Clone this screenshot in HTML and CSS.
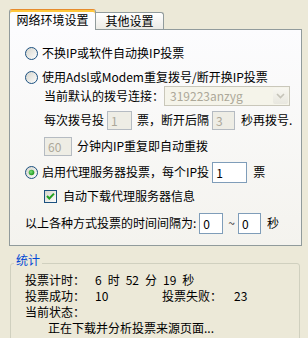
FILE: index.html
```html
<!DOCTYPE html>
<html>
<head>
<meta charset="utf-8" />
<title>投票设置</title>
<link rel="stylesheet" href="styles.css">
</head>
<body>
<svg class="defs" width="0" height="0">
	<defs>
		<linearGradient id="xpFill" x1="0" y1="0" x2="1" y2="1">
			<stop offset="0" stop-color="#D4D3CA"/>
			<stop offset="1" stop-color="#FFFFFF"/>
		</linearGradient>
		<radialGradient id="xpDot" cx="0.4" cy="0.4" r="0.6">
			<stop offset="0" stop-color="#7BE07B"/>
			<stop offset="1" stop-color="#1E961E"/>
		</radialGradient>
	</defs>
</svg>
<div class="tabbox">
	<div class="tabs">
		<div class="tab tab-on">网络环境设置</div>
		<div class="tab">其他设置</div>
	</div>
	<div class="panel">
		<div class="row pl1">
			<svg class="radio" viewBox="0 0 13 13"><circle cx="6.5" cy="6.5" r="6" fill="url(#xpFill)" stroke="#1C5180"/></svg>
			不换IP或软件自动换IP投票
		</div>
		<div class="row pl1 mt6">
			<svg class="radio" viewBox="0 0 13 13"><circle cx="6.5" cy="6.5" r="6" fill="url(#xpFill)" stroke="#1C5180"/></svg>
			使用Adsl或Modem重复拨号/断开换IP投票
		</div>
		<div class="row row-h20 pl2">
			当前默认的拨号连接：
			<div class="combo">
				<span class="combo-text">319223anzyg</span>
				<span class="combo-btn"><svg width="9" height="6" viewBox="0 0 9 6"><path d="M1 1 L4.5 4.5 L8 1" fill="none" stroke="#C5C3B8" stroke-width="1.6"/></svg></span>
			</div>
		</div>
		<div class="row row-h20 pl2 mt4">
			每次拨号投<input class="box box-off w25" type="text" value="1" disabled>票，断开后隔<input class="box box-off w23" type="text" value="3" disabled><span class="gap6">秒再拨号.</span>
		</div>
		<div class="row row-h20 pl2 mt6">
			<input class="box box-off w28 first" type="text" value="60" disabled>分钟内IP重复即自动重拨
		</div>
		<div class="row row-h22 pl1 mt5">
			<svg class="radio" viewBox="0 0 13 13"><circle cx="6.5" cy="6.5" r="6" fill="url(#xpFill)" stroke="#1C5180"/><circle cx="6.5" cy="6.5" r="2.8" fill="url(#xpDot)"/></svg>
			启用代理服务器投票，每个IP投<input class="box w35" type="text" value="1"><span class="gap6">票</span>
		</div>
		<div class="row pl2 mt4">
			<svg class="check" viewBox="0 0 13 13"><rect x="0.5" y="0.5" width="12" height="12" fill="url(#xpFill)" stroke="#1C5180"/><path d="M3 6 L5.3 8.5 L10 3.6" fill="none" stroke="#21A121" stroke-width="2"/></svg>
			自动下载代理服务器信息
		</div>
		<div class="row row-h22 pl1 mt7">
			以上各种方式投票的时间间隔为:<input class="box w24" type="text" value="0"><span class="tilde">~</span><input class="box w23 first" type="text" value="0"><span class="gap6">秒</span>
		</div>
	</div>
</div>
<fieldset class="stats">
	<legend>统计</legend>
	<div class="grid">
		<span>投票计时：</span>
		<span class="time"><span>6</span><span>时</span><span>52</span><span>分</span><span>19</span><span>秒</span></span>
		<span>投票成功：</span>
		<span>10</span>
		<span>投票失败：</span>
		<span>23</span>
		<span class="full">当前状态：</span>
		<span class="full status">正在下载并分析投票来源页面...</span>
	</div>
</fieldset>
</body>
</html>
```

FILE: styles.css
```css
*{margin: 0;padding: 0;box-sizing: border-box;}
html,body{height: 100%;overflow: hidden;}
body{background-color: #ECE9D8;color: #000;font: 12px/16px "Noto Sans CJK SC", "Liberation Sans", sans-serif;}
.defs{position: absolute;width: 0;height: 0;}

.tabbox{margin: 9px 6px 0 9px;}
.tabs{display: flex;align-items: flex-end;height: 20px;}
.tab{width: 68px;height: 17px;border: 1px solid #919B9C;border-bottom: 0;border-left: 0;border-radius: 0 3px 0 0;background: linear-gradient(#FFFFFF, #ECEBE6);text-align: center;line-height: 16px;}
.tab-on{position: relative;z-index: 1;width: 87px;height: 21px;margin-bottom: -1px;padding-top: 2px;border-left: 1px solid #919B9C;border-top: 1px solid #E68B2C;border-radius: 3px 3px 0 0;background: #FCFCFE;box-shadow: inset 0 2px 0 #FFC73C;}

.panel{height: 217px;padding-top: 14px;border: 1px solid #919B9C;background: linear-gradient(#FCFCFE, #F4F3EE);}
.row{display: flex;align-items: center;height: 18px;white-space: nowrap;}
.row-h20{height: 20px;}
.row-h22{height: 22px;}
.pl1{padding-left: 15px;}
.pl2{padding-left: 34px;}
.mt4{margin-top: 4px;}
.mt5{margin-top: 5px;}
.mt6{margin-top: 6px;}
.mt7{margin-top: 7px;}

.radio{flex: none;width: 13px;height: 13px;margin-right: 4px;}
.check{flex: none;width: 13px;height: 13px;margin-right: 6px;}

.combo{display: flex;width: 126px;height: 20px;border: 1px solid #C9C7BA;background-color: #F5F4EA;}
.combo-text{flex: 1;padding-left: 5px;line-height: 18px;color: #ACA899;}
.combo-btn{display: flex;align-items: center;justify-content: center;width: 15px;margin: 1px;border-radius: 2px;background: linear-gradient(#F7F6F0, #E8E7DF);}

.box{height: 21px;margin: 0 5px 0 3px;padding-left: 3px;border: 1px solid #7F9DB9;background-color: #fff;color: #000;font: 12px "Noto Sans CJK SC", "Liberation Sans", sans-serif;outline: none;}
.box-off{height: 19px;border-color: #B5BBC2;background-color: #EEEDE5;color: #ACA899;-webkit-text-fill-color: #ACA899;opacity: 1;}
.box.first{margin-left: 0;}
.w23{width: 23px;}
.w24{width: 24px;}
.w25{width: 25px;}
.w28{width: 28px;}
.w35{width: 35px;}
.gap6{margin-left: 1px;}
.tilde{margin-right: 3px;color: #333;}

.stats{height: 90px;margin: 8px 8px 0 10px;padding: 0 0 0 14px;border: 1px solid #D0D0BF;border-radius: 3px;}
.stats legend{margin-left: -11px;padding: 0 2px 6px;line-height: 12px;color: #0046D5;}
.grid{display: grid;grid-template-columns: 70px 67px 72px auto;line-height: 16px;}
.time{grid-column: 2 / 5;display: flex;gap: 6px;}
.full{grid-column: 1 / 5;}
.status{padding-left: 23px;}
```
